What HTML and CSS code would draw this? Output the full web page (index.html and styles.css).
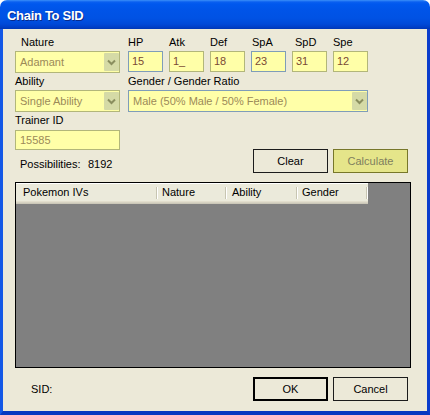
FILE: index.html
```html
<!DOCTYPE html>
<html>
<head>
<meta charset="utf-8">
<link rel="stylesheet" href="styles.css">
</head>
<body>
<div class="window">
  <div class="titlebar"><span class="title">Chain To SID</span></div>
  <div class="client">
    <div class="form-grid">
      <span class="lbl lbl-nature">Nature</span>
      <span class="lbl">HP</span>
      <span class="lbl">Atk</span>
      <span class="lbl">Def</span>
      <span class="lbl lbl-spa">SpA</span>
      <span class="lbl lbl-spd">SpD</span>
      <span class="lbl">Spe</span>

      <div class="combo olive"><span class="combo-text">Adamant</span><span class="combo-btn"><svg width="15" height="18" viewBox="0 0 15 18"><path d="M4 7.5 L7.5 11 L11 7.5" fill="none" stroke="#8a8e5e" stroke-width="2"/></svg></span></div>
      <div class="stat blue">15</div>
      <div class="stat olive">1_</div>
      <div class="stat olive">18</div>
      <div class="stat blue">23</div>
      <div class="stat olive">31</div>
      <div class="stat olive">12</div>

      <span class="lbl">Ability</span>
      <span class="lbl span">Gender / Gender Ratio</span>

      <div class="combo olive"><span class="combo-text">Single Ability</span><span class="combo-btn"><svg width="15" height="18" viewBox="0 0 15 18"><path d="M4 7.5 L7.5 11 L11 7.5" fill="none" stroke="#8a8e5e" stroke-width="2"/></svg></span></div>
      <div class="combo blue span wide"><span class="combo-text">Male (50% Male / 50% Female)</span><span class="combo-btn"><svg width="15" height="18" viewBox="0 0 15 18"><path d="M4 7.5 L7.5 11 L11 7.5" fill="none" stroke="#8a8e5e" stroke-width="2"/></svg></span></div>
    </div>

    <div class="mid">
      <div class="mid-left">
        <span class="lbl lbl-tid">Trainer ID</span>
        <div class="field olive">15585</div>
        <div class="poss"><span class="poss-lbl">Possibilities:</span><span>8192</span></div>
      </div>
      <div class="btn-row">
        <button class="btn">Clear</button>
        <button class="btn btn-calc">Calculate</button>
      </div>
    </div>

    <div class="listview">
      <div class="lv-header">
        <div class="col col-ivs">Pokemon IVs</div>
        <div class="col col-nature">Nature</div>
        <div class="col col-ability">Ability</div>
        <div class="col col-gender">Gender</div>
      </div>
    </div>

    <div class="footer">
      <span class="sid">SID:</span>
      <div class="btn-row">
        <button class="btn btn-default">OK</button>
        <button class="btn">Cancel</button>
      </div>
    </div>
  </div>
</div>
</body>
</html>
```
FILE: styles.css
```css
html, body {
  margin: 0;
  padding: 0;
  background: #ffffff;
}
body {
  font-family: "Liberation Sans", Arial, sans-serif;
  font-size: 11px;
  color: #000;
}
.window {
  width: 430px;
  height: 415px;
  display: flex;
  flex-direction: column;
}
.titlebar {
  height: 29px;
  box-sizing: border-box;
  border-radius: 7px 7px 0 0;
  background: linear-gradient(#3b8ff8 0, #0a5ff0 2px, #0058ee 4px, #0054e8 10px, #0052e4 18px, #0049d8 24px, #003fc8 27px, #0036b4 29px);
  padding: 8px 0 0 7px;
}
.title {
  display: block;
  font-weight: bold;
  font-size: 13px;
  line-height: 16px;
  letter-spacing: -0.3px;
  color: #fff;
  text-shadow: 1px 1px 0 #0a2a8a;
}
.client {
  flex: 1;
  background: #ece9d8;
  border-style: solid;
  border-width: 0 3px 4px 3px;
  border-color: #0a46d8 #0a3ccc #0638c0 #1458e6;
  padding: 7px 16px 0 12px;
  display: flex;
  flex-direction: column;
}
.form-grid {
  display: grid;
  grid-template-columns: 107px repeat(6, 35px);
  column-gap: 6px;
  row-gap: 2px;
  align-items: start;
}
.lbl {
  line-height: 13px;
  display: block;
}
.lbl-nature { padding-left: 6px; }
.lbl-spa { padding-left: 1px; }
.lbl-spd { padding-left: 3px; }
.span { grid-column: 2 / -1; }
.olive { border: 1px solid #b2b67a; }
.blue { border: 1px solid #7f9db9; }
.combo {
  width: 105px;
  height: 22px;
  box-sizing: border-box;
  background: #ffffa8;
  display: flex;
  align-items: center;
  justify-content: space-between;
  padding: 1px 0 1px 0;
}
.combo.wide { width: 240px; }
.combo-text {
  padding-left: 4px;
  color: #9c8a58;
  line-height: 18px;
}
.combo-btn {
  width: 15px;
  height: 18px;
  background: #d5daa6;
  display: block;
  border-radius: 1px;
}
.combo-btn svg { display: block; }
.stat {
  width: 35px;
  height: 21px;
  box-sizing: border-box;
  background: #ffffa8;
  color: #7a4a34;
  line-height: 19px;
  padding-left: 3px;
}
.mid {
  display: flex;
  justify-content: space-between;
  align-items: flex-end;
}
.mid-left {
  display: flex;
  flex-direction: column;
}
.lbl-tid { margin-top: 2px; }
.field {
  margin-top: 3px;
  width: 105px;
  height: 20px;
  box-sizing: border-box;
  background: #ffffa8;
  color: #9c8a58;
  line-height: 18px;
  padding-left: 4px;
}
.poss {
  margin-top: 8px;
  padding: 0 0 2px 5px;
  line-height: 13px;
  display: flex;
}
.poss-lbl { width: 68px; }
.btn-row {
  display: flex;
  gap: 5px;
  margin-right: 3px;
}
.btn {
  width: 75px;
  height: 24px;
  box-sizing: border-box;
  border: 1px solid #1c1c1c;
  background: #ece9d8;
  font-family: "Liberation Sans", Arial, sans-serif;
  font-size: 11px;
  color: #000;
  padding: 0;
  margin: 0;
}
.btn-calc {
  background: #e5e58a;
  border-color: #77772a;
  color: #7e7e5e;
}
.btn-default {
  border: 2px solid #000;
}
.listview {
  margin-top: 9px;
  width: 396px;
  height: 186px;
  box-sizing: border-box;
  border: 1px solid #000;
  background: #808080;
}
.lv-header {
  display: flex;
  width: 352px;
  height: 21px;
  background: linear-gradient(#ffffff 0, #ffffff 1px, #ebeadb 1px, #ebeadb 18px, #e2decd 18px, #e2decd 19px, #d6d2c2 19px, #d6d2c2 20px, #cbc7b8 20px, #cbc7b8 21px);
}
.col {
  box-sizing: border-box;
  line-height: 19px;
  padding-left: 4px;
  background:
    linear-gradient(#c7c5b2, #c7c5b2) no-repeat right 1px top 4px / 1px 12px,
    linear-gradient(#ffffff, #ffffff) no-repeat right 0 top 4px / 1px 12px;
}
.col-ivs { width: 142px; padding-left: 7px; }
.col-nature { width: 69px; }
.col-ability { width: 71px; padding-left: 5px; }
.col-gender { width: 70px; }
.footer {
  margin-top: 9px;
  display: flex;
  align-items: center;
}
.sid {
  flex: 1;
  padding-left: 16px;
  line-height: 13px;
}
```
